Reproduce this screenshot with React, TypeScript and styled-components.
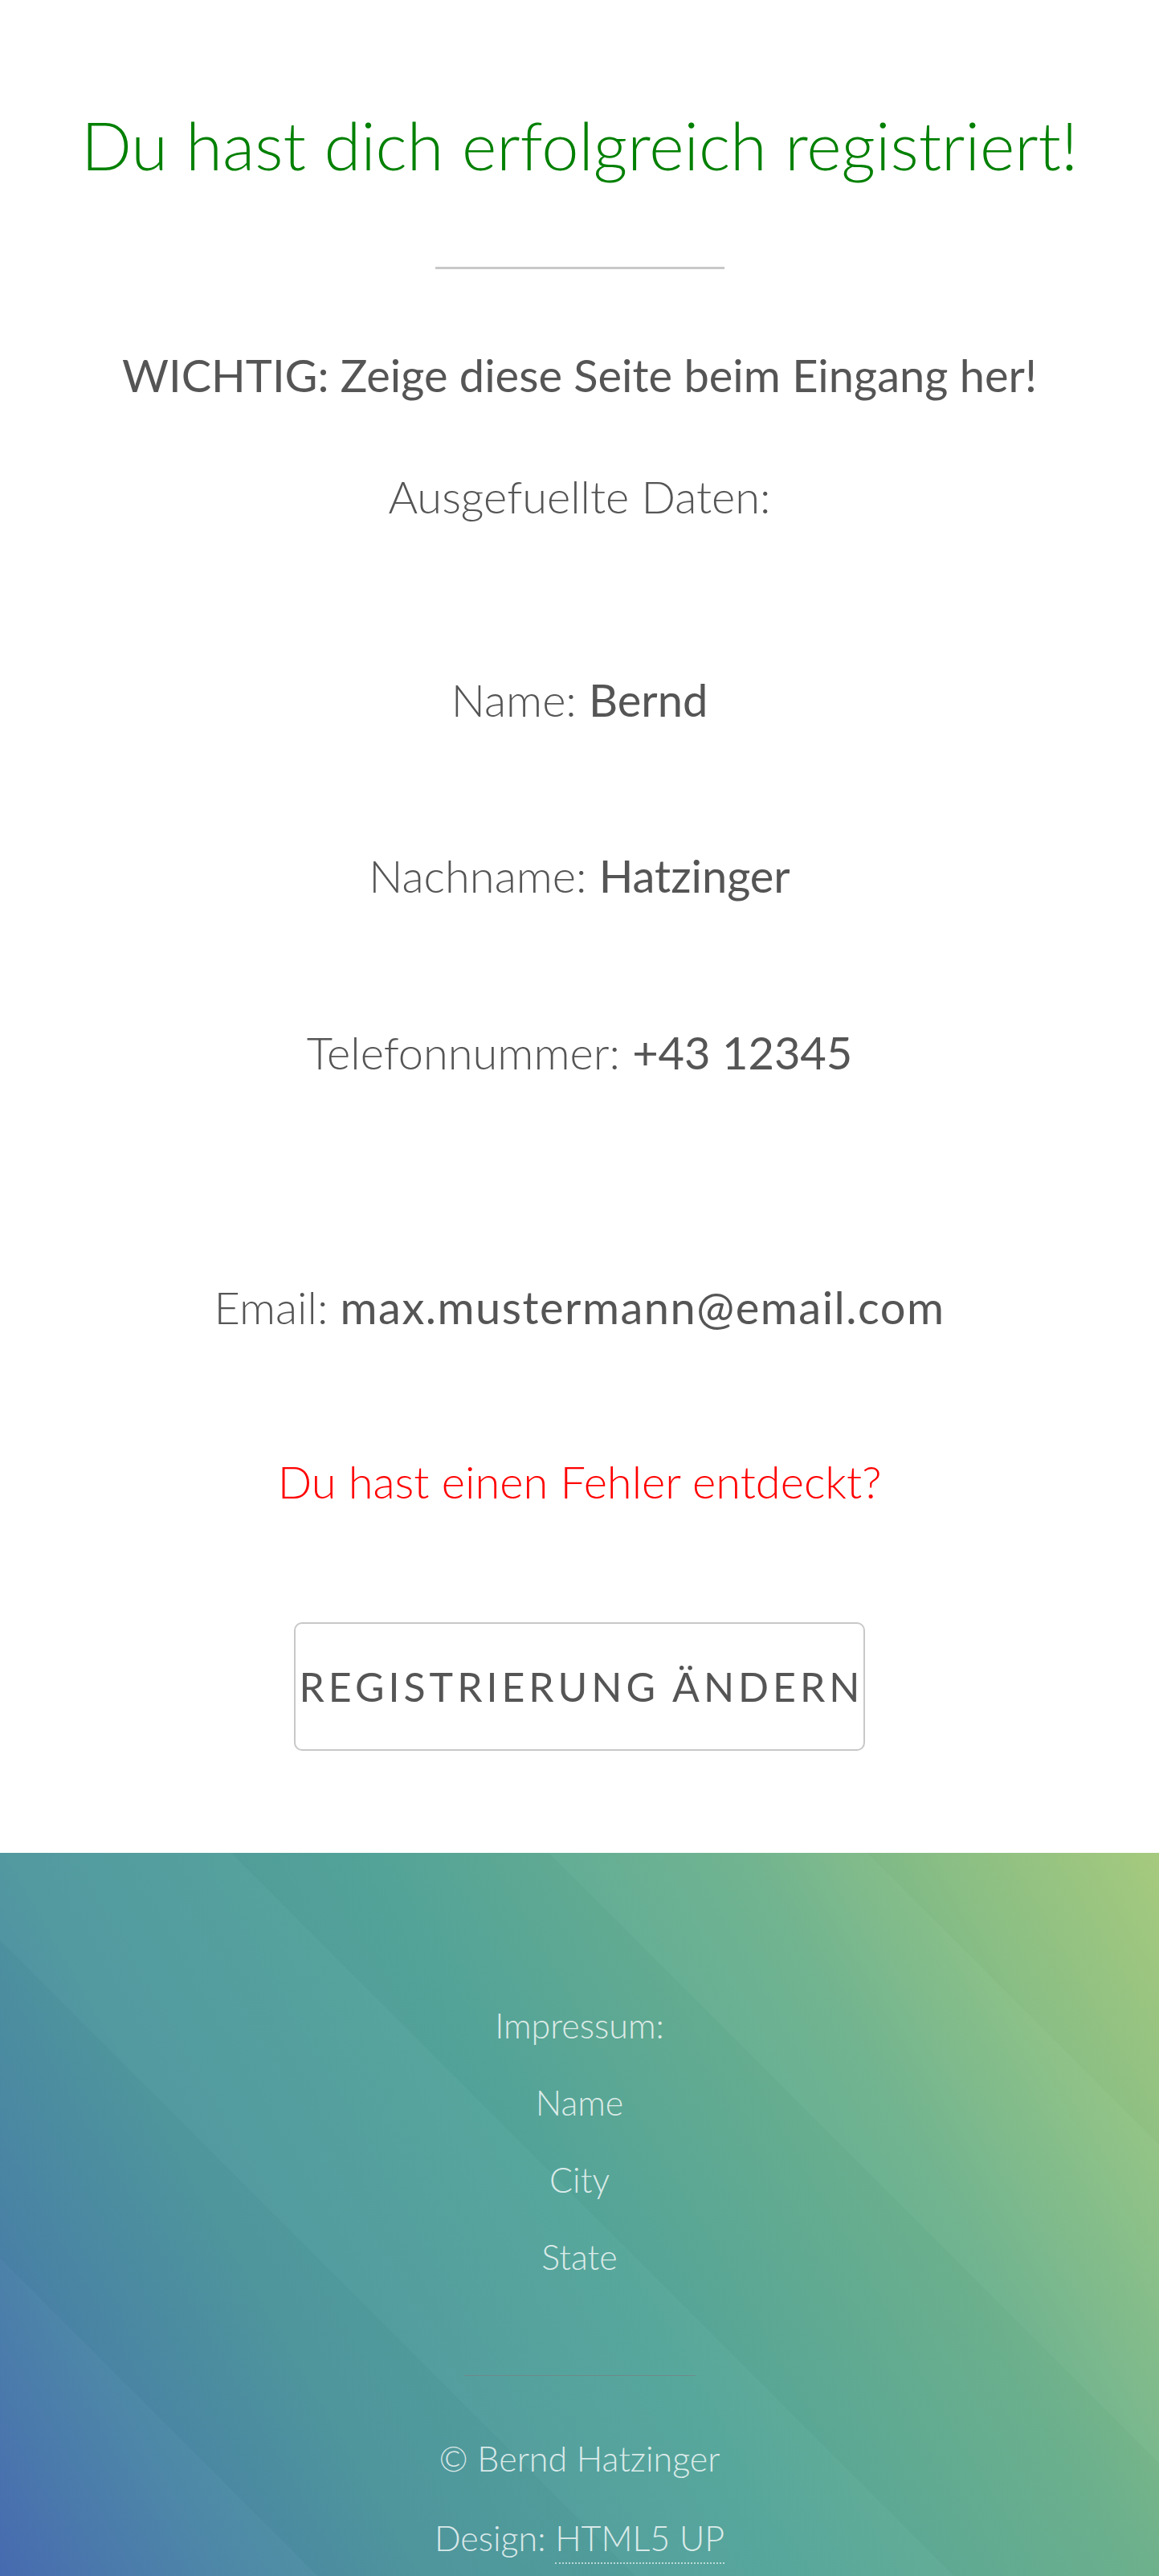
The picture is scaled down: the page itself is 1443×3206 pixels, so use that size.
import React from "react";
import styled, { createGlobalStyle } from "styled-components";

const GlobalStyle = createGlobalStyle`
  html, body {
    margin: 0;
    padding: 0;
    background: #ffffff;
  }
  body {
    font-family: "Lato", "Open Sans", "Liberation Sans", sans-serif;
    font-weight: 300;
    color: #555555;
  }
  * { box-sizing: border-box; }
`;

const Page = styled.div`
  display: flex;
  flex-direction: column;
  width: 100%;
`;

const Main = styled.main`
  display: flex;
  flex-direction: column;
  align-items: center;
  padding: 130px 0 127px;
  text-align: center;
`;

const Title = styled.h1`
  margin: 0;
  font-size: 83px;
  line-height: 100px;
  font-weight: 300;
  color: #008000;
  white-space: nowrap;
`;

const Divider = styled.hr<{ $width: number; $gap: number; $color: string; $size: number }>`
  width: ${(p) => p.$width}px;
  height: ${(p) => p.$size}px;
  margin: ${(p) => p.$gap}px auto 0;
  border: 0;
  background: ${(p) => p.$color};
`;

const Line = styled.p<{ $gap: number; $weight?: number; $color?: string }>`
  margin: ${(p) => p.$gap}px 0 0;
  font-size: 56px;
  line-height: 80px;
  font-weight: ${(p) => p.$weight ?? 300};
  color: ${(p) => p.$color ?? "#555555"};
  white-space: nowrap;
`;

const Value = styled.strong<{ $wide?: boolean }>`
  font-weight: 400;
  color: #555555;
  letter-spacing: ${(p) => (p.$wide ? "1.5px" : "0")};
`;

const Button = styled.a`
  display: inline-flex;
  align-items: center;
  justify-content: center;
  width: 711px;
  height: 160px;
  margin-top: 135px;
  padding-left: 5px;
  border: 2px solid #c8c8c8;
  border-radius: 10px;
  font-size: 50px;
  font-weight: 400;
  letter-spacing: 5px;
  color: #555555;
  text-decoration: none;
  white-space: nowrap;
  cursor: pointer;
`;

const Footer = styled.footer`
  display: flex;
  flex-direction: column;
  align-items: center;
  height: 900px;
  padding: 167px 0 0;
  text-align: center;
  overflow: hidden;
  color: rgba(255, 255, 255, 0.8);
  background-color: #52a39a;
  background-image:
    repeating-linear-gradient(
      45deg,
      rgba(255, 255, 255, 0.018) 0px,
      rgba(255, 255, 255, 0.018) 280px,
      rgba(0, 0, 0, 0.01) 280px,
      rgba(0, 0, 0, 0.01) 560px
    ),
    linear-gradient(
      60deg,
      #4367ae 0%,
      #4a85a6 14%,
      #4f979e 27%,
      #54a59a 50%,
      #6db28e 73%,
      #8bc086 86%,
      #a8cc7f 100%
    );
`;

const FooterLine = styled.p<{ $gap?: number; $height?: number }>`
  margin: ${(p) => p.$gap ?? 0}px 0 0;
  font-size: 43px;
  line-height: ${(p) => p.$height ?? 96}px;
  font-weight: 300;
  white-space: nowrap;
`;

const FooterLink = styled.a`
  color: inherit;
  text-decoration: none;
  padding-bottom: 5px;
  border-bottom: 2px dotted rgba(255, 255, 255, 0.6);
`;

export default function App() {
  return (
    <Page>
      <GlobalStyle />
      <Main>
        <Title>Du hast dich erfolgreich registriert!</Title>
        <Divider $width={360} $gap={102} $color="#c8c8c8" $size={3} />
        <Line $gap={92} $weight={400}>
          WICHTIG: Zeige diese Seite beim Eingang her!
        </Line>
        <Line $gap={71}>Ausgefuellte Daten:</Line>
        <Line $gap={173}>
          Name: <Value>Bernd</Value>
        </Line>
        <Line $gap={139}>
          Nachname: <Value>Hatzinger</Value>
        </Line>
        <Line $gap={140}>
          Telefonnummer: <Value>+43 12345</Value>
        </Line>
        <Line $gap={237}>
          Email: <Value $wide>max.mustermann@email.com</Value>
        </Line>
        <Line $gap={137} $color="#ff0000">
          Du hast einen Fehler entdeckt?
        </Line>
        <Button href="#">REGISTRIERUNG ÄNDERN</Button>
      </Main>
      <Footer>
        <FooterLine>Impressum:</FooterLine>
        <FooterLine>Name</FooterLine>
        <FooterLine>City</FooterLine>
        <FooterLine>State</FooterLine>
        <Divider $width={288} $gap={99} $color="rgba(120, 128, 132, 0.75)" $size={2} />
        <FooterLine $gap={55}>© Bernd Hatzinger</FooterLine>
        <FooterLine $gap={4} $height={94}>
          Design: <FooterLink href="#">HTML5 UP</FooterLink>
        </FooterLine>
      </Footer>
    </Page>
  );
}
